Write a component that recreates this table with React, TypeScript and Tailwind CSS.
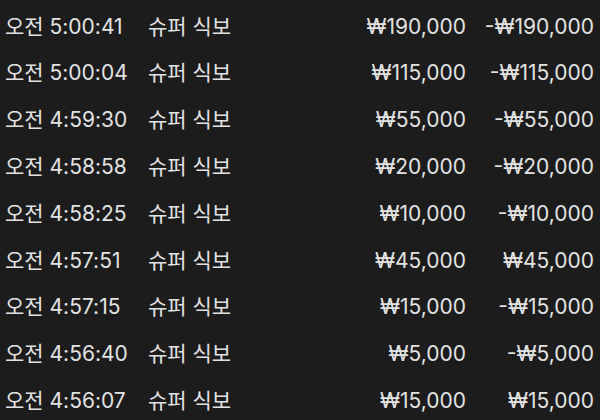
const ROWS = [
  { time: "오전 5:00:41", amount: "₩190,000", balance: "-₩190,000" },
  { time: "오전 5:00:04", amount: "₩115,000", balance: "-₩115,000" },
  { time: "오전 4:59:30", amount: "₩55,000", balance: "-₩55,000" },
  { time: "오전 4:58:58", amount: "₩20,000", balance: "-₩20,000" },
  { time: "오전 4:58:25", amount: "₩10,000", balance: "-₩10,000" },
  { time: "오전 4:57:51", amount: "₩45,000", balance: "₩45,000" },
  { time: "오전 4:57:15", amount: "₩15,000", balance: "-₩15,000" },
  { time: "오전 4:56:40", amount: "₩5,000", balance: "-₩5,000" },
  { time: "오전 4:56:07", amount: "₩15,000", balance: "₩15,000" },
];

export default function App() {
  return (
    <div
      className="w-[600px] h-[420px] overflow-hidden bg-[#1c1c1c] text-[#e2e2e2] text-[21px] pt-[3px]"
      style={{ fontFamily: 'Inter, "Noto Sans CJK KR", sans-serif' }}
    >
      {ROWS.map((row) => (
        <div key={row.time} className="flex items-center h-[46.8px] pl-[5px] pr-[6px]">
          <span className="w-[143px] shrink-0">{row.time}</span>
          <span className="shrink-0">슈퍼 식보</span>
          <span className="flex-1 text-right">{row.amount}</span>
          <span className="w-[128px] shrink-0 text-right">{row.balance}</span>
        </div>
      ))}
    </div>
  );
}
